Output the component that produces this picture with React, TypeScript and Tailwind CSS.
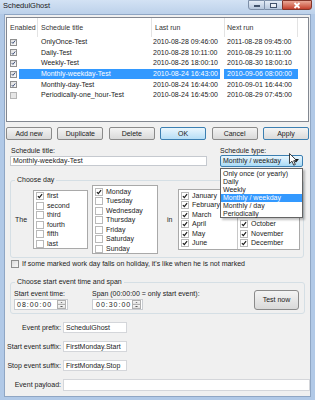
type Job = { title: string; last: string; next: string; on: boolean; sel?: boolean };

const jobs: Job[] = [
  { title: "OnlyOnce-Test", last: "2010-08-28 09:46:00", next: "2011-08-28 09:45:00", on: true },
  { title: "Daily-Test", last: "2010-08-28 10:11:00", next: "2010-08-29 10:11:00", on: true },
  { title: "Weekly-Test", last: "2010-08-26 18:00:10", next: "2010-08-30 18:00:10", on: true },
  { title: "Monthly-weekday-Test", last: "2010-08-24 16:43:00", next: "2010-09-06 08:00:00", on: true, sel: true },
  { title: "Monthly-day-Test", last: "2010-08-24 16:44:00", next: "2010-09-01 16:44:00", on: true },
  { title: "Periodically-one_hour-Test", last: "2010-08-24 16:45:00", next: "2010-08-29 07:45:00", on: false },
];

const ordinals = ["first", "second", "third", "fourth", "fifth", "last"];
const days = ["Monday", "Tuesday", "Wednesday", "Thursday", "Friday", "Saturday", "Sunday"];
const monthsA = ["January", "February", "March", "April", "May", "June"];
// July..September sit under the open dropdown
const monthsB = ["July", "August", "September", "October", "November", "December"];
const types = ["Only once (or yearly)", "Daily", "Weekly", "Monthly / weekday", "Monthly / day", "Periodically"];

function Tick({ color = "#1b1b1b" }: { color?: string }) {
  return (
    <svg viewBox="0 0 8 8" className="w-[6px] h-[6px]">
      <path d="M1.2 4.2 3.1 6.2 6.8 1.5" fill="none" stroke={color} strokeWidth="1.6" />
    </svg>
  );
}

function Box({ checked, dim }: { checked?: boolean; dim?: boolean }) {
  return (
    <span
      className={
        dim
          ? "w-[7px] h-[7px] shrink-0 border border-[#b5b5b5] bg-[#e6e6e6] flex items-center justify-center"
          : "w-[7px] h-[7px] shrink-0 border border-[#8e8f8f] bg-linear-to-br from-[#dedede] to-[#fbfbfb] flex items-center justify-center"
      }
    >
      {checked && <Tick color={dim ? "#777" : "#3d4f7a"} />}
    </span>
  );
}

function ListCheck({ label, checked, hidden }: { label: string; checked?: boolean; hidden?: boolean }) {
  return (
    <div className={`h-[9.5px] flex items-center gap-[3px] ${hidden ? "invisible" : ""}`}>
      <span className="w-[8px] h-[8px] shrink-0 border border-[#b9b9b9] bg-white flex items-center justify-center">
        {checked && <Tick />}
      </span>
      <span>{label}</span>
    </div>
  );
}

function Btn({ label, blue, focus }: { label: string; blue?: boolean; focus?: boolean }) {
  const cls = focus
    ? "border-[#3c7fb1] from-[#eaf6fd] to-[#b6def6]"
    : blue
    ? "border-[#3c7fb1] from-[#f4f4f4] to-[#dadada]"
    : "border-[#8a8a8a] from-[#f4f4f4] to-[#d9d9d9]";
  return (
    <div className={`w-[46px] h-[13px] rounded-[2px] border bg-linear-to-b flex items-center justify-center ${cls}`}>
      {label}
    </div>
  );
}

function Spin() {
  return (
    <div className="ml-auto w-[9px] h-[9px] flex flex-col">
      <div className="h-[4.5px] border border-[#b0b0b0] bg-linear-to-b from-[#f7f7f7] to-[#e0e0e0] flex items-center justify-center">
        <svg viewBox="0 0 4 2" className="w-[3px] h-[1.5px]">
          <path d="M0 2 2 0 4 2Z" fill="#555" />
        </svg>
      </div>
      <div className="h-[4.5px] border border-t-0 border-[#b0b0b0] bg-linear-to-b from-[#f7f7f7] to-[#e0e0e0] flex items-center justify-center">
        <svg viewBox="0 0 4 2" className="w-[3px] h-[1.5px]">
          <path d="M0 0 2 2 4 0Z" fill="#555" />
        </svg>
      </div>
    </div>
  );
}

function TitleBar() {
  return (
    <div className="h-[14px] shrink-0 flex items-start bg-linear-to-b from-[#d3e2f4] to-[#bcd1ea]">
      <span className="pl-[3px] pt-[2px] text-[7.5px] leading-[8px] text-[#1a1a1a]">SchedulGhost</span>
      <div className="ml-auto mr-[3px] flex h-[10px]">
        <div className="w-[17px] border border-[#7d8fa8] rounded-bl-[3px] bg-linear-to-b from-[#e4ecf6] to-[#b5c6dc] flex items-end justify-center pb-[2px]">
          <span className="w-[6px] h-[2px] bg-white border-[0.5px] border-[#41526b]" />
        </div>
        <div className="w-[17px] border-y border-[#7d8fa8] bg-linear-to-b from-[#e4ecf6] to-[#b5c6dc] flex items-center justify-center">
          <span className="w-[7px] h-[5px] border border-[#41526b] bg-white/60" />
        </div>
        <div className="w-[30px] border border-[#84362a] rounded-br-[3px] bg-linear-to-b from-[#e9a897] to-[#c43f2c] flex items-center justify-center">
          <svg viewBox="0 0 8 7" className="w-[8px] h-[7px]">
            <path d="M1.5 1 6.5 6M6.5 1 1.5 6" stroke="#ffffff" strokeWidth="1.8" />
          </svg>
        </div>
      </div>
    </div>
  );
}

function JobList() {
  return (
    <div className="ml-[1px] mt-[2px] w-[303px] h-[105px] shrink-0 border border-[#828790] bg-white flex flex-col">
      <div className="h-[19px] flex text-[#333]">
        <div className="w-[31px] border-r border-[#e3e3e3] pl-[3px] flex items-center">Enabled</div>
        <div className="w-[114px] border-r border-[#e3e3e3] pl-[3px] flex items-center">Schedule title</div>
        <div className="w-[73px] border-r border-[#e3e3e3] pl-[3px] flex items-center">Last run</div>
        <div className="w-[73px] border-r border-[#e3e3e3] pl-[2px] flex items-center">Next run</div>
        <div className="flex-1" />
      </div>
      {jobs.map((j) => (
        <div key={j.title} className="h-[10.6px] flex items-center whitespace-nowrap">
          <div className="w-[12px] pl-[3px] flex items-center">
            <Box checked={j.on} dim={!j.on} />
          </div>
          <div className={`w-[201px] h-full flex items-center ${j.sel ? "bg-[#3399ff] text-white" : ""}`}>
            <span className="w-[133px] pl-[22px]">{j.title}</span>
            <span className="w-[68px] pl-[1px]">{j.last}</span>
          </div>
          <div className="w-[4px]" />
          <div className={`w-[74px] h-full pl-[3px] flex items-center ${j.sel ? "bg-[#3399ff] text-white" : ""}`}>
            {j.next}
          </div>
        </div>
      ))}
    </div>
  );
}

function Cursor() {
  return (
    <svg viewBox="0 0 8 13" className="absolute left-[69px] top-[6px] w-[8px] h-[13px]">
      <path d="M0.5 0.5V10.5L3 8.2 4.7 12.2 6.3 11.5 4.7 7.7H7.8Z" fill="#ffffff" stroke="#111" strokeWidth="0.8" />
    </svg>
  );
}

export default function App() {
  return (
    <div className="w-[315px] h-[400px] overflow-hidden bg-[#b1c9e7] flex flex-col font-['Liberation_Sans',Arial,sans-serif] text-[7px] leading-[8px] text-[#1b1b1b]">
      <TitleBar />
      <div className="ml-[4px] w-[307px] h-[383px] border border-[#8fa6c4] bg-[#f0f0f0] flex flex-col">
        <JobList />

        <div className="ml-[1px] mt-[5px] flex gap-[5.4px]">
          <Btn label="Add new" />
          <Btn label="Duplicate" />
          <Btn label="Delete" />
          <Btn label="OK" focus />
          <Btn label="Cancel" />
          <Btn label="Apply" blue />
        </div>

        <div className="mt-[7px] flex">
          <div className="ml-[5px] w-[197px] flex flex-col">
            <span className="pl-[1px] h-[8px]">Schedule title:</span>
            <div className="mt-[1px] h-[10px] border border-[#c5c9cf] bg-white pl-[2px] flex items-center">
              Monthly-weekday-Test
            </div>
          </div>
          <div className="ml-[13px] w-[83px] flex flex-col relative z-10">
            <span className="h-[8px]">Schedule type:</span>
            <div className="h-[12px] border border-[#3c7fb1] rounded-[2px] bg-linear-to-b from-[#eaf6fd] to-[#a9dbf6] pl-[2px] flex items-center">
              Monthly / weekday
              <svg viewBox="0 0 6 4" className="ml-auto mr-[3px] w-[6px] h-[4px]">
                <path d="M0 0H6L3 3.5Z" fill="#111" />
              </svg>
            </div>
            <div className="absolute left-0 top-[21px] w-[83px] h-[50px] border border-[#646464] bg-white pt-[1px] shadow-[2px_2px_2px_rgba(0,0,0,0.25)]">
              {types.map((t) => (
                <div
                  key={t}
                  className={`h-[8px] pl-[2px] flex items-center ${t === "Monthly / weekday" ? "bg-[#3399ff] text-white" : ""}`}
                >
                  {t}
                </div>
              ))}
            </div>
            <Cursor />
          </div>
        </div>

        <fieldset className="ml-[5px] mt-[9px] w-[294px] border border-[#d5dfe5] rounded-[3px] pb-[3px]">
          <legend className="ml-[4px] px-[2px] leading-[8px]">Choose day</legend>
          <div className="pt-[1px] pl-[4px] flex items-center">
            <span className="w-[18px]">The</span>
            <div className="w-[55px] h-[59px] border border-[#a9a9a9] bg-white pl-[2px] pt-[0.5px]">
              {ordinals.map((o, i) => (
                <ListCheck key={o} label={o} checked={i === 0} />
              ))}
            </div>
            <div className="ml-[4px] w-[66px] h-[69px] border border-[#a9a9a9] bg-white pl-[2px] pt-[1px]">
              {days.map((d, i) => (
                <ListCheck key={d} label={d} checked={i === 0} />
              ))}
            </div>
            <span className="ml-[9px] w-[11px]">in</span>
            <div className="w-[122px] h-[61px] border border-[#a9a9a9] bg-white flex">
              <div className="w-[59px] border-r border-[#c8c8c8] pl-[2px] pt-[1px]">
                {monthsA.map((m) => (
                  <ListCheck key={m} label={m} checked />
                ))}
              </div>
              <div className="pl-[2px] pt-[1px]">
                {monthsB.map((m, i) => (
                  <ListCheck key={m} label={m} checked hidden={i < 3} />
                ))}
              </div>
            </div>
          </div>
        </fieldset>

        <div className="ml-[6px] mt-[2px] h-[8px] flex items-center gap-[3px]">
          <span className="w-[8px] h-[8px] border border-[#8e8f8f] bg-linear-to-br from-[#dcdcdc] to-[#f8f8f8]" />
          <span>If some marked work day falls on holiday, it's like when he is not marked</span>
        </div>

        <fieldset className="ml-[5px] mt-[10px] w-[295px] border border-[#d5dfe5] rounded-[3px] pb-[3px]">
          <legend className="ml-[4px] px-[2px] leading-[8px]">Choose start event time and span</legend>
          <div className="pt-[4px] pl-[3px] pr-[5px] flex items-start">
            <div className="w-[78px] flex flex-col">
              <span className="h-[8px]">Start event time:</span>
              <div className="mt-[1px] w-[54px] h-[11px] border border-[#c9ccd1] bg-white pl-[2px] pr-[1px] flex items-center">
                <span className="tracking-[1px]">08:00:00</span>
                <Spin />
              </div>
            </div>
            <div className="flex flex-col">
              <span className="h-[8px]">Span (00:00:00 = only start event):</span>
              <div className="mt-[1px] w-[51px] h-[11px] border border-[#c9ccd1] bg-white pl-[3px] pr-[1px] flex items-center">
                <span className="tracking-[1px]">00:30:00</span>
                <Spin />
              </div>
            </div>
            <div className="ml-auto w-[45px] h-[20px] rounded-[3px] border border-[#8a8a8a] bg-linear-to-b from-[#f4f4f4] to-[#d9d9d9] flex items-center justify-center">
              Test now
            </div>
          </div>
        </fieldset>

        <div className="mt-[8px] flex flex-col gap-[8px]">
          {[
            ["Event prefix:", "SchedulGhost"],
            ["Start event suffix:", "FirstMonday.Start"],
            ["Stop event suffix:", "FirstMonday.Stop"],
          ].map(([l, v]) => (
            <div key={l} className="h-[11px] flex items-center">
              <span className="w-[56px] text-right">{l}</span>
              <div className="ml-[2px] w-[64px] h-[11px] border border-[#d4d6da] bg-white pl-[2px] flex items-center">{v}</div>
            </div>
          ))}
          <div className="h-[11px] flex items-center">
            <span className="w-[56px] text-right">Event payload:</span>
            <div className="ml-[2px] w-[247px] h-[12px] border border-[#d4d6da] bg-white" />
          </div>
        </div>
      </div>
    </div>
  );
}
